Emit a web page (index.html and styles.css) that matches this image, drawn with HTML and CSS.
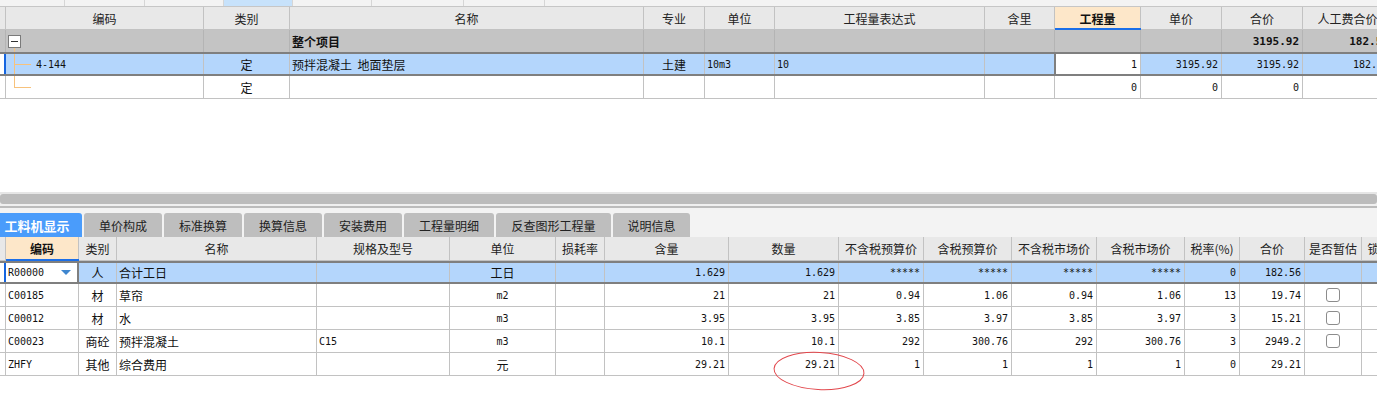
FILE: index.html
```html
<!DOCTYPE html>
<html lang="zh">
<head>
<meta charset="utf-8">
<title>工料机显示</title>
<link rel="stylesheet" href="styles.css">
</head>
<body>
<div class="strip">
  <span class="s1"></span><span class="s2"></span><span class="s3"></span><span class="s4 on"></span><span class="s5"></span><span class="s6"></span><span class="s7"></span>
</div>

<div class="grid top">
  <div class="row hdr">
    <div class="c"></div><div class="c">编码</div><div class="c">类别</div><div class="c">名称</div><div class="c">专业</div><div class="c">单位</div><div class="c">工程量表达式</div><div class="c">含里</div><div class="c key">工程量</div><div class="c">单价</div><div class="c">合价</div><div class="c">人工费合价</div>
  </div>
  <div class="row total">
    <div class="c g"></div>
    <div class="c"><span class="minus"></span></div>
    <div class="c"></div>
    <div class="c b">整个项目</div>
    <div class="c"></div><div class="c"></div><div class="c"></div><div class="c"></div><div class="c"></div><div class="c"></div>
    <div class="c n bn">3195.92</div>
    <div class="c n bn">182.56</div>
  </div>
  <div class="row sel">
    <div class="c g"></div>
    <div class="c m"><span class="tree tee"></span>4-144</div>
    <div class="c ctr">定</div>
    <div class="c">预拌混凝土&nbsp; 地面垫层</div>
    <div class="c ctr">土建</div>
    <div class="c m">10m3</div>
    <div class="c m">10</div>
    <div class="c before-edit"></div>
    <div class="c n edit">1</div>
    <div class="c n">3195.92</div>
    <div class="c n">3195.92</div>
    <div class="c n">182.56</div>
  </div>
  <div class="row">
    <div class="c g"></div>
    <div class="c m"><span class="tree end"></span></div>
    <div class="c ctr">定</div>
    <div class="c"></div><div class="c"></div><div class="c"></div><div class="c"></div><div class="c"></div>
    <div class="c n">0</div>
    <div class="c n">0</div>
    <div class="c n">0</div>
    <div class="c n"></div>
  </div>
</div>

<div class="blank"></div>

<div class="split"><div class="bar"></div></div>

<div class="tabs">
  <div class="tab active">工料机显示</div>
  <div class="tab w78">单价构成</div>
  <div class="tab w78">标准换算</div>
  <div class="tab w78">换算信息</div>
  <div class="tab w78">安装费用</div>
  <div class="tab w90">工程量明细</div>
  <div class="tab w115">反查图形工程量</div>
  <div class="tab w77">说明信息</div>
</div>

<div class="grid bot">
  <div class="row hdr">
    <div class="c"></div><div class="c key">编码</div><div class="c">类别</div><div class="c">名称</div><div class="c">规格及型号</div><div class="c">单位</div><div class="c">损耗率</div><div class="c">含量</div><div class="c">数量</div><div class="c">不含税预算价</div><div class="c">含税预算价</div><div class="c">不含税市场价</div><div class="c">含税市场价</div><div class="c">税率(%)</div><div class="c">合价</div><div class="c">是否暂估</div><div class="c">锁定数量</div>
  </div>
  <div class="row sel">
    <div class="c g"></div>
    <div class="c m combo">R00000<span class="arrow"></span></div>
    <div class="c ctr">人</div>
    <div class="c">合计工日</div>
    <div class="c"></div>
    <div class="c ctr">工日</div>
    <div class="c"></div>
    <div class="c n">1.629</div>
    <div class="c n">1.629</div>
    <div class="c n">*****</div>
    <div class="c n">*****</div>
    <div class="c n">*****</div>
    <div class="c n">*****</div>
    <div class="c n">0</div>
    <div class="c n">182.56</div>
    <div class="c"></div>
    <div class="c"></div>
  </div>
  <div class="row">
    <div class="c g"></div>
    <div class="c m">C00185</div>
    <div class="c ctr">材</div>
    <div class="c">草帘</div>
    <div class="c"></div>
    <div class="c m ctr">m2</div>
    <div class="c"></div>
    <div class="c n">21</div>
    <div class="c n">21</div>
    <div class="c n">0.94</div>
    <div class="c n">1.06</div>
    <div class="c n">0.94</div>
    <div class="c n">1.06</div>
    <div class="c n">13</div>
    <div class="c n">19.74</div>
    <div class="c ctr"><span class="cb"></span></div>
    <div class="c"></div>
  </div>
  <div class="row">
    <div class="c g"></div>
    <div class="c m">C00012</div>
    <div class="c ctr">材</div>
    <div class="c">水</div>
    <div class="c"></div>
    <div class="c m ctr">m3</div>
    <div class="c"></div>
    <div class="c n">3.95</div>
    <div class="c n">3.95</div>
    <div class="c n">3.85</div>
    <div class="c n">3.97</div>
    <div class="c n">3.85</div>
    <div class="c n">3.97</div>
    <div class="c n">3</div>
    <div class="c n">15.21</div>
    <div class="c ctr"><span class="cb"></span></div>
    <div class="c"></div>
  </div>
  <div class="row">
    <div class="c g"></div>
    <div class="c m">C00023</div>
    <div class="c ctr">商砼</div>
    <div class="c">预拌混凝土</div>
    <div class="c m">C15</div>
    <div class="c m ctr">m3</div>
    <div class="c"></div>
    <div class="c n">10.1</div>
    <div class="c n">10.1</div>
    <div class="c n">292</div>
    <div class="c n">300.76</div>
    <div class="c n">292</div>
    <div class="c n">300.76</div>
    <div class="c n">3</div>
    <div class="c n">2949.2</div>
    <div class="c ctr"><span class="cb"></span></div>
    <div class="c"></div>
  </div>
  <div class="row">
    <div class="c g"></div>
    <div class="c m">ZHFY</div>
    <div class="c ctr">其他</div>
    <div class="c">综合费用</div>
    <div class="c"></div>
    <div class="c ctr">元</div>
    <div class="c"></div>
    <div class="c n">29.21</div>
    <div class="c n">29.21</div>
    <div class="c n">1</div>
    <div class="c n">1</div>
    <div class="c n">1</div>
    <div class="c n">1</div>
    <div class="c n">0</div>
    <div class="c n">29.21</div>
    <div class="c"></div>
    <div class="c"></div>
  </div>
</div>

<svg class="mark" width="96" height="44" viewBox="0 0 96 44">
  <ellipse cx="47" cy="21" rx="45" ry="18.5" transform="rotate(3 47 21)" fill="none" stroke="#e2474c" stroke-width="1"/>
</svg>
</body>
</html>
```

FILE: styles.css
```css
* { box-sizing: border-box; }
html, body { margin: 0; padding: 0; }
body {
  width: 1377px;
  height: 413px;
  overflow: hidden;
  position: relative;
  background: #fff;
  font-family: "Noto Sans CJK SC", "Noto Sans", sans-serif;
  font-size: 12px;
  color: #111;
}

/* top strip */
.strip {
  display: flex;
  height: 7px;
  background: #f3f3f3;
  border-bottom: 1px solid #c6c6c6;
}
.strip span { flex: none; border-right: 1px solid #d6d6d6; }
.strip .s1 { width: 65px; }
.strip .s2 { width: 80px; }
.strip .s3 { width: 79px; }
.strip .s4 { width: 69px; }
.strip .s5 { width: 79px; }
.strip .s6 { width: 92px; }
.strip .s7 { width: 81px; }
.strip .on { background: #c7e2fb; }

/* grids */
.grid { width: 1377px; overflow: hidden; }
.row {
  display: grid;
  width: max-content;
  height: 23px;
  border-bottom: 1px solid #c2c2c2;
}
.top .row { grid-template-columns: 6px 198px 86px 354px 61px 70px 210px 70px 86px 81px 81px 90px; }
.bot .row { grid-template-columns: 6px 73px 38px 200px 133px 106px 49px 124px 110px 85px 88px 85px 88px 55px 65px 57px 60px; }

.c {
  display: flex;
  align-items: center;
  min-width: 0;
  overflow: hidden;
  white-space: nowrap;
  padding: 0 2px;
  border-right: 1px solid #c2c2c2;
}
.hdr { background: #e8e8e8; }
.hdr .c { justify-content: center; color: #222; padding: 0; }
.bot .hdr { height: 24px; }
.hdr .key {
  position: relative;
  background: #fde7c9;
  font-weight: bold;
  color: #111;
  overflow: visible;
}
.hdr .key::after {
  content: "";
  position: absolute;
  left: 0;
  right: -1px;
  bottom: -1px;
  height: 2px;
  background: #1c6fe8;
}

.total { height: 22px; background: #c4c4c4; border-bottom: none; }
.total .c { border-right-color: #b4b4b4; }

.sel {
  background: #b4d6fc;
  border-top: 2px solid #7f7f7f;
  border-bottom: 2px solid #7f7f7f;
  height: 24px;
}
.bot .sel { height: 23px; }
.sel .g { background: #fff; border-right: 2px solid #1565e0; }

.ctr { justify-content: center; }
.b { font-weight: bold; }
.m { font-family: "DejaVu Sans Mono", "Liberation Mono", monospace; font-size: 10px; }
.n {
  justify-content: flex-end;
  padding-right: 3px;
  font-family: "DejaVu Sans Mono", "Liberation Mono", monospace;
  font-size: 10px;
}
.bn { font-weight: bold; font-size: 11px; }

.before-edit { border-right-color: #7f7f7f; }
.edit { background: #fff; border-left: 1px solid #7f7f7f; }

/* tree */
.minus {
  position: relative;
  width: 13px;
  height: 13px;
  border: 1px solid #7a7a7a;
  background: #fff linear-gradient(#333, #333) no-repeat center / 7px 1px;
}
.minus::after {
  content: "";
  position: absolute;
  left: 5px;
  top: 12px;
  width: 1px;
  height: 6px;
  background: #f7c27c;
}
.tree {
  align-self: stretch;
  flex: none;
  width: 22px;
  margin-left: 6px;
}
.tee {
  background:
    linear-gradient(#f7c27c, #f7c27c) no-repeat 0 0 / 1px 100%,
    linear-gradient(#f7c27c, #f7c27c) no-repeat 0 50% / 17px 1px;
}
.end {
  background:
    linear-gradient(#f7c27c, #f7c27c) no-repeat 0 0 / 1px 50%,
    linear-gradient(#f7c27c, #f7c27c) no-repeat 0 50% / 17px 1px;
}

.blank { height: 93px; }

/* splitter */
.split {
  height: 16px;
  background: #f0f0f0;
  border-top: 2px solid #e6e6e6;
  border-bottom: 2px solid #bcbcbc;
  padding-bottom: 2px;
}
.bar { height: 10px; background: #bcbcbc; border-radius: 3px; }

/* tabs */
.tabs {
  display: flex;
  gap: 2px;
  height: 29px;
  padding-top: 5px;
  background: #f3f3f3;
}
.tab {
  flex: none;
  display: flex;
  align-items: center;
  justify-content: center;
  height: 24px;
  background: #bebebe;
  border-radius: 3px 3px 0 0;
  color: #222;
  font-size: 12px;
}
.tab.active {
  width: 82px;
  background: #4a9cfb;
  color: #fff;
  font-weight: bold;
  font-size: 13px;
  padding-right: 8px;
  border-radius: 0 3px 0 0;
}
.w78 { width: 78px; }
.w90 { width: 90px; }
.w115 { width: 115px; }
.w77 { width: 77px; }

/* bottom extras */
.combo {
  background: #fff;
  border-right: 2px solid #7f7f7f;
}
.arrow {
  margin-left: auto;
  margin-right: 4px;
  width: 0;
  height: 0;
  border-left: 5px solid transparent;
  border-right: 5px solid transparent;
  border-top: 5px solid #3f86cf;
}
.cb {
  width: 14px;
  height: 14px;
  border: 1px solid #8c8c8c;
  border-radius: 3px;
  background: #fff;
}

.mark {
  position: absolute;
  left: 772px;
  top: 350px;
}
```
